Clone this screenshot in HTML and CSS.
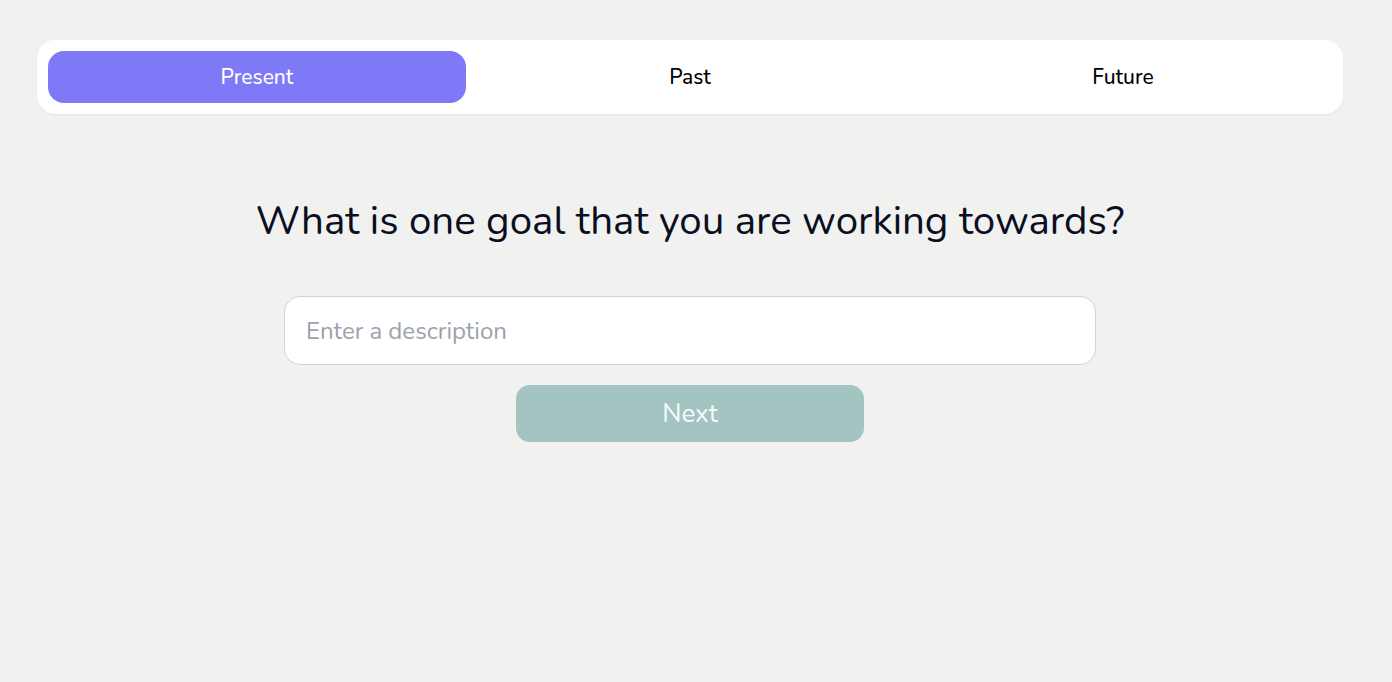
FILE: index.html
```html
<!DOCTYPE html>
<html lang="en">
<head>
<meta charset="utf-8">
<title>Goal</title>
<link rel="stylesheet" href="styles.css">
</head>
<body>
<div class="page">
  <nav class="tabs">
    <button class="tab active">Present</button>
    <button class="tab">Past</button>
    <button class="tab">Future</button>
  </nav>
  <main class="content">
    <h1 class="question">What is one goal that you are working towards?</h1>
    <input class="field" type="text" placeholder="Enter a description">
    <button class="next">Next</button>
  </main>
</div>
</body>
</html>
```
FILE: styles.css
```css
* { box-sizing: border-box; }
html, body { margin: 0; padding: 0; background: #f1f1ef; }
body { font-family: "Nunito", "Lato", "Noto Sans", sans-serif; }
.page { padding: 40px 49px 0 37px; }
.tabs {
  display: flex;
  gap: 15px;
  padding: 11px;
  background: #ffffff;
  border-radius: 18px;
  box-shadow: 0 1px 2px rgba(0,0,0,0.06);
}
.tab {
  flex: 1 1 0;
  height: 52px;
  border: 0;
  border-radius: 16px;
  background: transparent;
  font-family: inherit;
  font-size: 21px;
  font-weight: 500;
  color: #000;
}
.tab.active { background: #7f78f7; color: #fff; }
.content {
  display: flex;
  flex-direction: column;
  align-items: center;
}
.question {
  margin: 83px 0 0;
  font-size: 40.3px;
  font-weight: 450;
  color: #0a0e1f;
  line-height: 48px;
}
.field {
  margin-top: 51px;
  width: 812px;
  height: 69px;
  border: 1px solid #d3d3d8;
  border-radius: 16px;
  background: #fff;
  padding: 0 21px;
  font-family: inherit;
  font-size: 24px;
  color: #111;
  outline: none;
}
.field::placeholder { color: #9ca1ae; }
.next {
  margin-top: 20px;
  width: 348px;
  height: 57px;
  border: 0;
  border-radius: 14px;
  background: #a4c4c2;
  color: rgba(255,255,255,0.95);
  font-family: inherit;
  font-size: 26px;
}
```
